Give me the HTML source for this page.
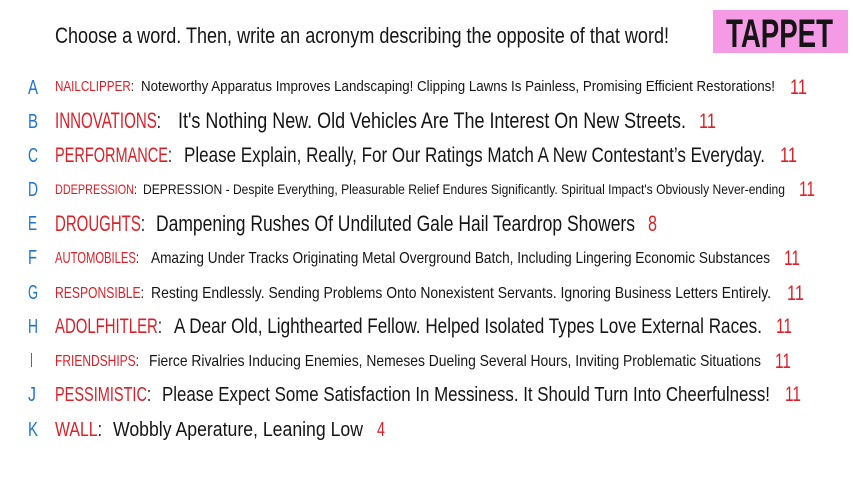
<!DOCTYPE html>
<html><head><meta charset="utf-8"><style>
html,body{margin:0;padding:0;background:#fff;width:853px;height:480px;overflow:hidden}
svg{display:block}
text{font-family:"Liberation Sans Narrow","Liberation Sans",sans-serif;fill:#151515}
.r{fill:#dd1f28}.b{fill:#1e74d0}
</style></head><body>
<svg width="853" height="480" viewBox="0 0 853 480" xmlns="http://www.w3.org/2000/svg">
<text x="55" y="43" font-size="22" textLength="614" lengthAdjust="spacingAndGlyphs">Choose a word. Then, write an acronym describing the opposite of that word!</text>
<rect x="713" y="10" width="135" height="43" fill="#f59be6"/>
<text x="726" y="47" font-size="40" font-weight="bold" textLength="107" lengthAdjust="spacingAndGlyphs">TAPPET</text>

<g font-size="20">
<text class="b" x="28" y="94" textLength="10" lengthAdjust="spacingAndGlyphs">A</text>
<text class="b" x="28" y="128" textLength="10" lengthAdjust="spacingAndGlyphs">B</text>
<text class="b" x="28" y="162" textLength="10" lengthAdjust="spacingAndGlyphs">C</text>
<text class="b" x="28" y="196" textLength="10" lengthAdjust="spacingAndGlyphs">D</text>
<text class="b" x="28" y="230" textLength="9" lengthAdjust="spacingAndGlyphs">E</text>
<text class="b" x="28" y="264" textLength="9" lengthAdjust="spacingAndGlyphs">F</text>
<text class="b" x="28" y="299" textLength="10" lengthAdjust="spacingAndGlyphs">G</text>
<text class="b" x="28" y="333" textLength="10" lengthAdjust="spacingAndGlyphs">H</text>
<text class="b" x="30" y="367" textLength="3" lengthAdjust="spacingAndGlyphs">I</text>
<text class="b" x="28" y="401" textLength="8" lengthAdjust="spacingAndGlyphs">J</text>
<text class="b" x="28" y="436" textLength="10" lengthAdjust="spacingAndGlyphs">K</text>
</g>

<!-- A -->
<text x="55" y="91" font-size="15" textLength="79" lengthAdjust="spacingAndGlyphs"><tspan class="r">NAILCLIPPER</tspan>:</text>
<text x="141" y="91" font-size="15" textLength="634" lengthAdjust="spacingAndGlyphs">Noteworthy Apparatus Improves Landscaping! Clipping Lawns Is Painless, Promising Efficient Restorations!</text>
<text class="r" x="790" y="94" font-size="21" textLength="17" lengthAdjust="spacingAndGlyphs">11</text>
<!-- B -->
<text x="55" y="128" font-size="22" textLength="106" lengthAdjust="spacingAndGlyphs"><tspan class="r">INNOVATIONS</tspan>:</text>
<text x="178" y="128" font-size="22" textLength="508" lengthAdjust="spacingAndGlyphs">It's Nothing New. Old Vehicles Are The Interest On New Streets.</text>
<text class="r" x="699" y="128" font-size="21" textLength="17" lengthAdjust="spacingAndGlyphs">11</text>
<!-- C -->
<text x="55" y="162" font-size="21" textLength="117" lengthAdjust="spacingAndGlyphs"><tspan class="r">PERFORMANCE</tspan>:</text>
<text x="184" y="162" font-size="21" textLength="581" lengthAdjust="spacingAndGlyphs">Please Explain, Really, For Our Ratings Match A New Contestant’s Everyday.</text>
<text class="r" x="780" y="162" font-size="21" textLength="17" lengthAdjust="spacingAndGlyphs">11</text>
<!-- D -->
<text x="55" y="194" font-size="14" textLength="82" lengthAdjust="spacingAndGlyphs"><tspan class="r">DDEPRESSION</tspan>:</text>
<text x="143" y="194" font-size="14" textLength="642" lengthAdjust="spacingAndGlyphs">DEPRESSION - Despite Everything, Pleasurable Relief Endures Significantly. Spiritual Impact's Obviously Never-ending</text>
<text class="r" x="799" y="196" font-size="21" textLength="16" lengthAdjust="spacingAndGlyphs">11</text>
<!-- E -->
<text x="55" y="231" font-size="22" textLength="90" lengthAdjust="spacingAndGlyphs"><tspan class="r">DROUGHTS</tspan>:</text>
<text x="156" y="231" font-size="22" textLength="479" lengthAdjust="spacingAndGlyphs">Dampening Rushes Of Undiluted Gale Hail Teardrop Showers</text>
<text class="r" x="648" y="231" font-size="22" textLength="9" lengthAdjust="spacingAndGlyphs">8</text>
<!-- F -->
<text x="55" y="263" font-size="16" textLength="84" lengthAdjust="spacingAndGlyphs"><tspan class="r">AUTOMOBILES</tspan>:</text>
<text x="151" y="263" font-size="16" textLength="619" lengthAdjust="spacingAndGlyphs">Amazing Under Tracks Originating Metal Overground Batch, Including Lingering Economic Substances</text>
<text class="r" x="784" y="265" font-size="21" textLength="16" lengthAdjust="spacingAndGlyphs">11</text>
<!-- G -->
<text x="55" y="298" font-size="16" textLength="89" lengthAdjust="spacingAndGlyphs"><tspan class="r">RESPONSIBLE</tspan>:</text>
<text x="151" y="298" font-size="16" textLength="620" lengthAdjust="spacingAndGlyphs">Resting Endlessly. Sending Problems Onto Nonexistent Servants. Ignoring Business Letters Entirely.</text>
<text class="r" x="787" y="300" font-size="21" textLength="17" lengthAdjust="spacingAndGlyphs">11</text>
<!-- H -->
<text x="55" y="333" font-size="21" textLength="107" lengthAdjust="spacingAndGlyphs"><tspan class="r">ADOLFHITLER</tspan>:</text>
<text x="174" y="333" font-size="21" textLength="588" lengthAdjust="spacingAndGlyphs">A Dear Old, Lighthearted Fellow. Helped Isolated Types Love External Races.</text>
<text class="r" x="776" y="333" font-size="21" textLength="16" lengthAdjust="spacingAndGlyphs">11</text>
<!-- I -->
<text x="55" y="366" font-size="16" textLength="84" lengthAdjust="spacingAndGlyphs"><tspan class="r">FRIENDSHIPS</tspan>:</text>
<text x="149" y="366" font-size="16" textLength="612" lengthAdjust="spacingAndGlyphs">Fierce Rivalries Inducing Enemies, Nemeses Dueling Several Hours, Inviting Problematic Situations</text>
<text class="r" x="775" y="368" font-size="21" textLength="16" lengthAdjust="spacingAndGlyphs">11</text>
<!-- J -->
<text x="55" y="401" font-size="20" textLength="96" lengthAdjust="spacingAndGlyphs"><tspan class="r">PESSIMISTIC</tspan>:</text>
<text x="162" y="401" font-size="20" textLength="608" lengthAdjust="spacingAndGlyphs">Please Expect Some Satisfaction In Messiness. It Should Turn Into Cheerfulness!</text>
<text class="r" x="785" y="401" font-size="21" textLength="16" lengthAdjust="spacingAndGlyphs">11</text>
<!-- K -->
<text x="55" y="436" font-size="20" textLength="47" lengthAdjust="spacingAndGlyphs"><tspan class="r">WALL</tspan>:</text>
<text x="113" y="436" font-size="20" textLength="250" lengthAdjust="spacingAndGlyphs">Wobbly Aperature, Leaning Low</text>
<text class="r" x="377" y="436" font-size="20" textLength="8" lengthAdjust="spacingAndGlyphs">4</text>
</svg>
</body></html>
